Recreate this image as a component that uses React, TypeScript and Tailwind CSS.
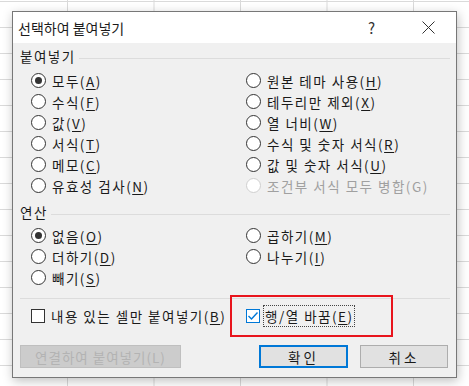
import type { ReactNode } from 'react';

const font = { fontFamily: '"Noto Sans CJK KR", "Noto Sans", sans-serif' };

function Key({ k }: { k: string }) {
  return (
    <>
      (<u className="underline-offset-2">{k}</u>)
    </>
  );
}

function Radio({ checked, disabled, children }: { checked?: boolean; disabled?: boolean; children: ReactNode }) {
  return (
    <div className="flex items-center gap-[6px] h-[21px]">
      <span
        className={`w-[15px] h-[15px] shrink-0 rounded-full border flex items-center justify-center bg-white ${
          disabled ? 'border-[#cfcfcf]' : 'border-[#333]'
        }`}
      >
        {checked && <span className="w-[7px] h-[7px] rounded-full bg-[#333]" />}
      </span>
      <span className={`whitespace-nowrap ${disabled ? 'text-[#a0a0a0]' : 'text-[#1a1a1a]'}`}>{children}</span>
    </div>
  );
}

function Section({ title }: { title: string }) {
  return (
    <div className="flex items-center h-[16px] gap-[3px]">
      <span className="text-[#1a1a1a] whitespace-nowrap">{title}</span>
      <span className="flex-1 h-px bg-[#dcdcdc] mt-[4px]" />
    </div>
  );
}

export default function App() {
  return (
    <div
      className="relative w-[469px] h-[386px] overflow-hidden bg-white [background-image:linear-gradient(to_right,#dadada_1px,transparent_1px),linear-gradient(to_bottom,#dadada_1px,transparent_1px)] [background-size:86.5px_26px] [background-position:67px_1px]"
      style={font}
    >
      <div className="absolute left-[12px] top-[11px] w-[445px] h-[367px] border border-[#777] bg-[#f0f0f0] shadow-[1px_3px_10px_rgba(0,0,0,0.25)] flex flex-col text-[13.5px] leading-[16px] tracking-[1.5px]">
        {/* title bar */}
        <div className="h-[31px] bg-white flex items-center pl-[5px] shrink-0 tracking-normal">
          <span className="text-[14px] text-[#1a1a1a] flex-1">선택하여 붙여넣기</span>
          <span className="text-[15px] text-[#333] w-[8px] mr-[46px]">?</span>
          <svg width="13" height="13" viewBox="0 0 13 13" className="mr-[21px]">
            <path d="M0.5 0.5 L12.5 12.5 M12.5 0.5 L0.5 12.5" stroke="#333" strokeWidth="1" />
          </svg>
        </div>

        <div className="relative flex-1 flex flex-col pl-[7px] pr-[6px]">
          <div className="mt-[5px]">
            <Section title="붙여넣기" />
          </div>
          <div className="grid grid-cols-[215px_1fr] pl-[11px] mt-[6px]">
            <div className="flex flex-col">
              <Radio checked>모두<Key k="A" /></Radio>
              <Radio>수식<Key k="F" /></Radio>
              <Radio>값<Key k="V" /></Radio>
              <Radio>서식<Key k="T" /></Radio>
              <Radio>메모<Key k="C" /></Radio>
              <Radio>유효성 검사<Key k="N" /></Radio>
            </div>
            <div className="flex flex-col">
              <Radio>원본 테마 사용<Key k="H" /></Radio>
              <Radio>테두리만 제외<Key k="X" /></Radio>
              <Radio>열 너비<Key k="W" /></Radio>
              <Radio>수식 및 숫자 서식<Key k="R" /></Radio>
              <Radio>값 및 숫자 서식<Key k="U" /></Radio>
              <Radio disabled>조건부 서식 모두 병합(G)</Radio>
            </div>
          </div>

          <div className="mt-[8px]">
            <Section title="연산" />
          </div>
          <div className="grid grid-cols-[215px_1fr] pl-[11px] mt-[5px]">
            <div className="flex flex-col">
              <Radio checked>없음<Key k="O" /></Radio>
              <Radio>더하기<Key k="D" /></Radio>
              <Radio>빼기<Key k="S" /></Radio>
            </div>
            <div className="flex flex-col">
              <Radio>곱하기<Key k="M" /></Radio>
              <Radio>나누기<Key k="I" /></Radio>
            </div>
          </div>

          <div className="h-px bg-[#dcdcdc] mt-[10px]" />

          <div className="grid grid-cols-[215px_1fr] pl-[11px] mt-[6px] h-[22px] items-center">
            <div className="flex items-center gap-[6px]">
              <span className="w-[14px] h-[14px] shrink-0 border border-[#333] bg-white" />
              <span className="whitespace-nowrap text-[#1a1a1a]">내용 있는 셀만 붙여넣기<Key k="B" /></span>
            </div>
            <div className="flex items-center gap-[3px]">
              <span className="w-[14px] h-[14px] shrink-0 border border-[#0078d7] bg-white flex items-center justify-center">
                <svg width="12" height="12" viewBox="0 0 12 12">
                  <path d="M1.5 6 L4.5 9 L10.5 2.5" fill="none" stroke="#0078d7" strokeWidth="1.4" />
                </svg>
              </span>
              <span className="whitespace-nowrap text-[#1a1a1a] border border-dotted border-[#444] pl-[1px] h-[22px] flex items-center">
                행/열 바꿈<Key k="E" />
              </span>
            </div>
          </div>

          <div className="flex items-center mt-[18px] pr-[2px]">
            <div className="w-[161px] h-[23px] bg-[#cccccc] border border-[#bfbfbf] flex items-center justify-center text-[#b3b3b3] whitespace-nowrap tracking-[1px]">
              연결하여 붙여넣기(L)
            </div>
            <div className="flex-1" />
            <div className="w-[89px] h-[23px] bg-[#e1e1e1] border-2 border-[#0078d7] flex items-center justify-center text-[#1a1a1a] tracking-[3px]">
              확인
            </div>
            <div className="w-[88px] h-[23px] ml-[12px] bg-[#e1e1e1] border border-[#adadad] flex items-center justify-center text-[#1a1a1a] tracking-[3px]">
              취소
            </div>
          </div>

          {/* red highlight annotation */}
          <div className="absolute left-[217px] top-[252px] w-[163px] h-[42px] border-2 border-[#e8141c]" />
        </div>
      </div>
    </div>
  );
}
